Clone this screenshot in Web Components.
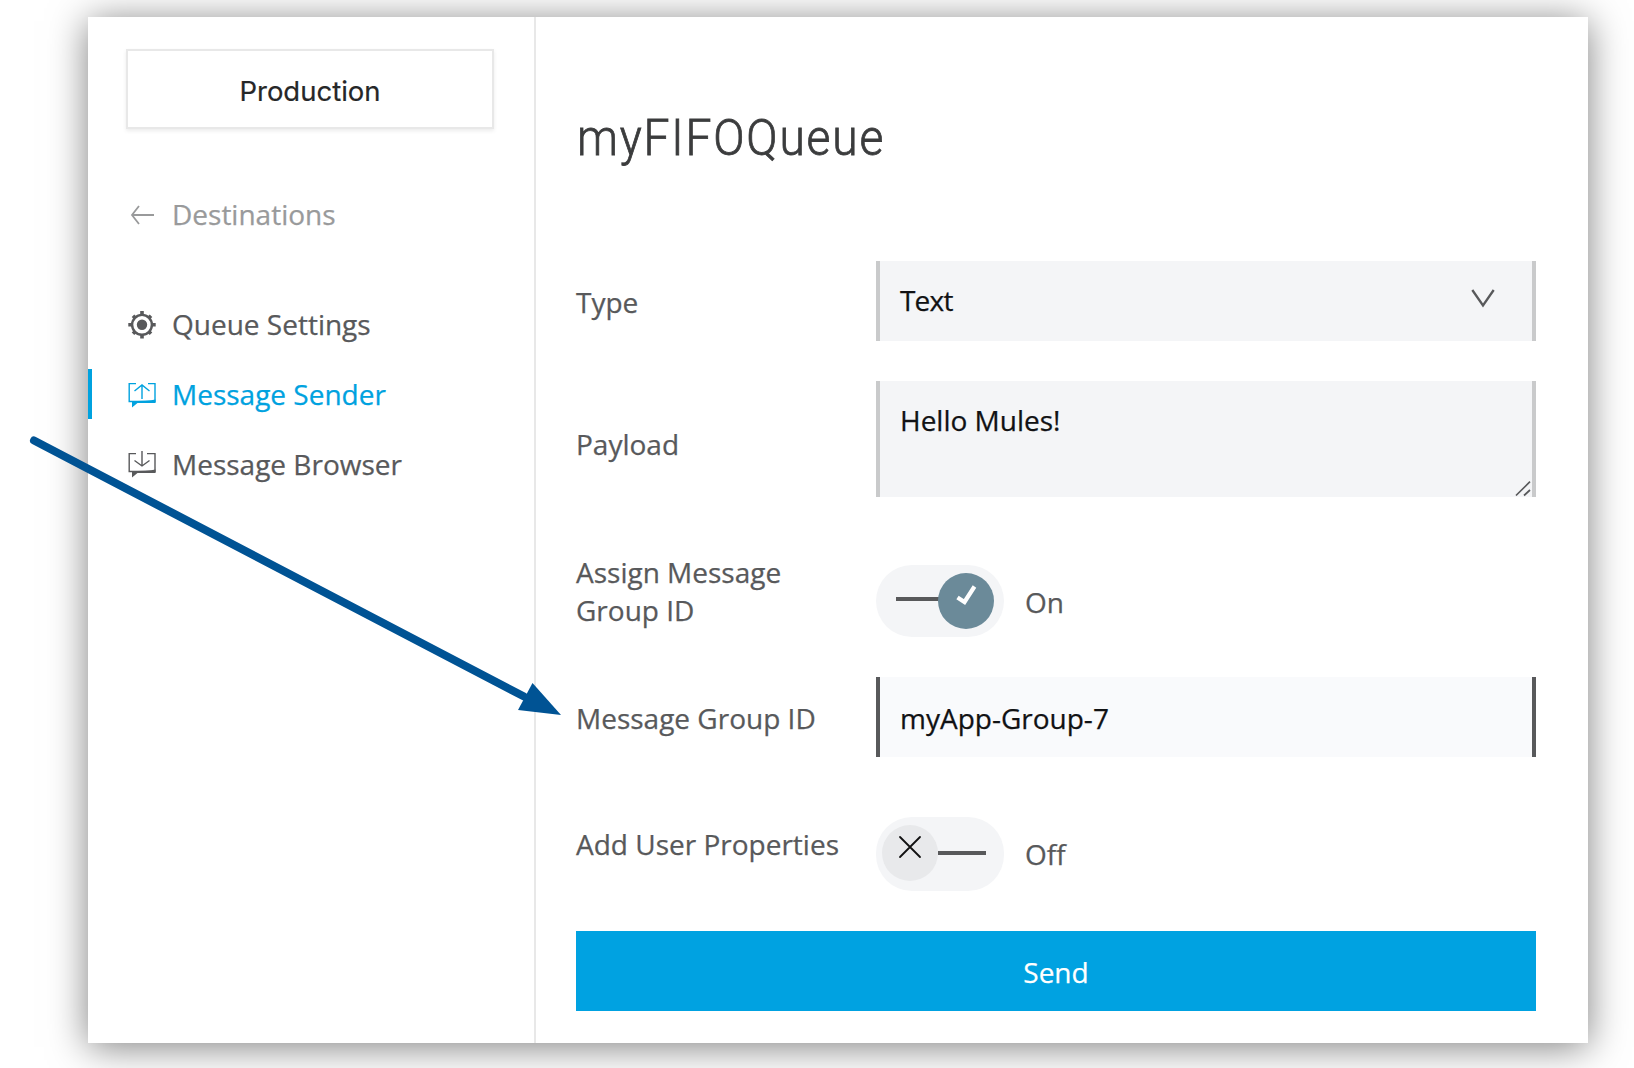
<!DOCTYPE html>
<html lang="en">
<head>
<meta charset="utf-8">
<title>myFIFOQueue</title>
<style>
html,body{margin:0;height:100%;background:#fff;overflow:hidden}
body{font:28px/38px "Open Sans","Noto Sans",sans-serif;color:#58595b;-webkit-text-stroke:.25px}
</style>
</head>
<body>
<mq-window>
  <mq-sidebar slot="side">
    <mq-environment>Production</mq-environment>
    <mq-nav-item kind="back">Destinations</mq-nav-item>
    <mq-nav-item kind="gear">Queue Settings</mq-nav-item>
    <mq-nav-item kind="send" active>Message Sender</mq-nav-item>
    <mq-nav-item kind="browse">Message Browser</mq-nav-item>
  </mq-sidebar>
  <mq-title>myFIFOQueue</mq-title>
  <mq-row style="--pad:22px"><span slot="label">Type</span><mq-field kind="select">Text</mq-field></mq-row>
  <mq-row style="--pad:44px"><span slot="label">Payload</span><mq-field kind="area">Hello Mules!</mq-field></mq-row>
  <mq-row style="--top:16px"><span slot="label">Assign Message Group ID</span><mq-toggle on>On</mq-toggle></mq-row>
  <mq-row style="--pad:22px"><span slot="label">Message Group ID</span><mq-field kind="focus">myApp-Group-7</mq-field></mq-row>
  <mq-row style="--pad:8px;--top:20px"><span slot="label">Add User Properties</span><mq-toggle>Off</mq-toggle></mq-row>
  <mq-button>Send</mq-button>
</mq-window>
<mq-arrow></mq-arrow>
<script>
const define = (name, render) => customElements.define(name, class extends HTMLElement {
  connectedCallback() {
    if (this.shadowRoot) return;
    this.attachShadow({ mode: 'open' }).innerHTML = render(this);
  }
});

define('mq-window', () => `<style>
:host{display:grid;grid-template-columns:446px 1fr;width:1500px;height:1026px;margin:17px 0 0 88px;background:#fff;box-shadow:0 4px 36px rgba(0,0,0,.5)}
main{border-left:2px solid #e8e8e8;padding:92px 52px 0 40px;display:flex;flex-direction:column;gap:40px}
</style><slot name="side"></slot><main><slot></slot></main>`);

define('mq-sidebar', () => `<style>
:host{display:flex;flex-direction:column;padding-top:32px}
</style><slot></slot>`);

define('mq-environment', () => `<style>
:host{display:flex;align-items:center;justify-content:center;box-sizing:border-box;width:368px;height:80px;margin:0 0 60px 38px;padding-top:3px;border:2px solid #e8e8e8;box-shadow:0 2px 4px rgba(0,0,0,.08);color:#262728;font-family:Inter,sans-serif;font-size:27.5px;-webkit-text-stroke:.2px}
</style><slot></slot>`);

const icons = {
  back: '<path d="M26 16H4M11 7L4 16l7 9" stroke-width="1.8"/>',
  gear: '<g transform="translate(0 .8)"><path d="M14 1.300v4M14 24.700v4M.300 15h4M23.700 15h4M5 6l2 2M21 22l2 2M5 24l2-2M21 8l2-2" stroke-width="3.600"/><circle cx="14" cy="15" r="9.900" stroke-width="2.400"/><circle cx="14" cy="15" r="5.200" fill="currentColor" stroke="none"/></g>',
  send: '<path d="M8 4.600H1.200V22.500H27V4.600H20M14 20V6.200M6.500 12L14 6l7.500 6" stroke-width="1.400"/><path d="M4 22.500V28.500L9.500 24H27.500V20.500Q20 22 1 22Z" fill="currentColor" stroke="none"/>',
  browse: '<path d="M8 4.600H1.200V22.500H27V4.600H19M14 2V17M6.500 11.500L14 17l7.500-5.500" stroke-width="1.400"/><path d="M4 22.500V28.500L9.500 24H27.500V20.500Q20 22 1 22Z" fill="currentColor" stroke="none"/>'
};
define('mq-nav-item', el => `<style>
:host{display:flex;align-items:center;box-sizing:border-box;height:50px;margin-bottom:20px;padding-left:36px;border-left:4px solid transparent}
:host([active]){color:#00a2df;border-color:#00a2df}
:host([kind=back]){color:#999a9b;margin-bottom:60px}
svg{width:28px;height:30px;margin-right:16px;fill:none;stroke:currentColor;overflow:visible}
</style><svg viewBox="0 0 28 30">${icons[el.getAttribute('kind')]}</svg><slot></slot>`);

define('mq-title', () => `<style>
:host{display:block;height:60px;line-height:58px;margin:0 0 52px 1px;font-family:Roboto,sans-serif;font-weight:300;font-size:50.5px;color:#3b3c3d;white-space:nowrap;-webkit-text-stroke:.8px}
span{display:inline-block;transform:scaleX(.914);transform-origin:0 50%;letter-spacing:2px}
</style><span><slot></slot></span>`);

define('mq-row', () => `<style>
:host{display:grid;grid-template-columns:300px 660px;margin-top:var(--top,0px);align-items:start}
div{padding:var(--pad,0px) 20px 0 0;white-space:normal}
</style><div><slot name="label"></slot></div><slot></slot>`);

define('mq-field', el => {
  const kind = el.getAttribute('kind');
  const art = kind === 'select' ? '<svg width="24" height="20" viewBox="0 0 24 20"><path d="M1.300 1L12 16.500 22.700 1" stroke-width="2.300"/></svg>'
    : kind === 'area' ? '<svg width="16" height="16" viewBox="0 0 16 16"><path d="M1 14.500L15 .700M9 14.500l6-5.500" stroke-width="1.700"/></svg>' : '';
  return `<style>
:host{display:flex;justify-content:space-between;box-sizing:border-box;height:80px;padding:20px 37px 0 20px;background:#f4f5f7;border:solid #c9cacb;border-width:0 4px;color:#111214}
:host([kind=select]){letter-spacing:-.8px}
:host([kind=area]){height:116px;padding-right:1px}
:host([kind=focus]){background:#f9fafc;border-color:#58595b;padding-top:22px}
svg{fill:none;stroke:#58595b;margin-top:8px}
:host([kind=area]) svg{align-self:flex-end}
</style><slot></slot>${art}`;
});

define('mq-toggle', el => {
  const on = el.hasAttribute('on');
  return `<style>
:host{display:flex;gap:21px;margin-top:${on ? 12 : 0}px}
span{margin-top:18px}
</style>` + (on
  ? `<svg width="128" height="72"><rect width="128" height="72" rx="36" fill="#f4f5f7"/><path d="M20 34H64" stroke="#58595b" stroke-width="4"/><circle cx="90" cy="36" r="28" fill="#6b8a99"/><path d="M81.500 32.500L88.500 37 98.500 21.500" fill="none" stroke="#fff" stroke-width="4.200"/></svg>`
  : `<svg width="128" height="74"><rect width="128" height="74" rx="36" fill="#f4f5f7"/><circle cx="34" cy="36" r="28" fill="#e8e9eb"/><path d="M62 36H110" stroke="#58595b" stroke-width="4"/><path d="M24 20L44 40M44 20L24 40" stroke="#111" stroke-width="1.800" stroke-linecap="round"/></svg>`)
  + '<span><slot></slot></span>';
});

define('mq-button', () => `<style>
:host{display:flex;align-items:center;justify-content:center;height:80px;padding-top:2px;box-sizing:border-box;background:#00a2e1;color:#fff}
</style><slot></slot>`);

define('mq-arrow', () => `<style>
:host{position:absolute;left:0;top:400px;width:600px;height:340px;pointer-events:none}
</style><svg width="600" height="340"><path d="M34 40.500L524 296.500" stroke="#005394" stroke-width="8" stroke-linecap="round"/><path d="M532.500 283L561 315 518 310Z" fill="#005394"/></svg>`);
</script>
</body>
</html>
